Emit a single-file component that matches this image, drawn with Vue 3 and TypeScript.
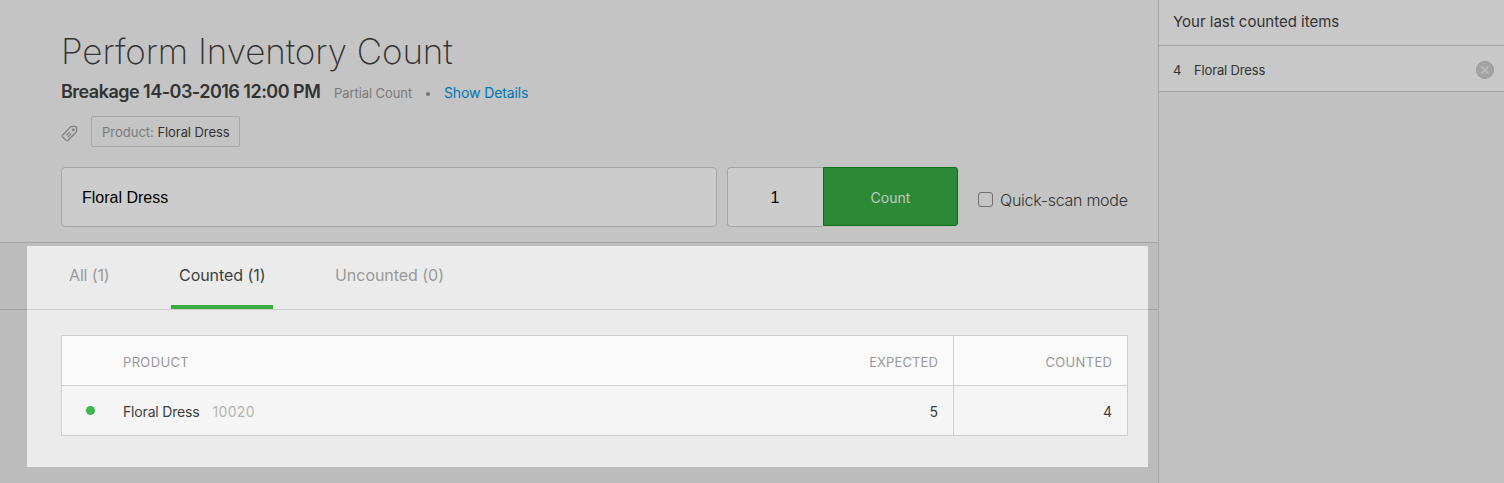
<script setup lang="ts">
interface CountedItem {
  name: string
  sku: string
  expected: number
  counted: number
}

interface Tab {
  key: string
  label: string
  count: number
}

const items: CountedItem[] = [{ name: 'Floral Dress', sku: '10020', expected: 5, counted: 4 }]

const tabs: Tab[] = [
  { key: 'all', label: 'All', count: 1 },
  { key: 'counted', label: 'Counted', count: 1 },
  { key: 'uncounted', label: 'Uncounted', count: 0 },
]
const activeTab = 'counted'
</script>

<template>
  <div class="page">
    <main class="main">
      <header class="head">
        <h1 class="title"><span>Perform Inventory Count</span></h1>
        <div class="meta">
          <strong class="name">Breakage 14-03-2016 12:00 PM</strong>
          <span class="kind">Partial Count</span>
          <i class="sep"></i>
          <a class="link">Show Details</a>
        </div>
        <div class="filters">
          <svg class="tag" width="17" height="17" viewBox="0 0 17 17" fill="none" stroke="#a0a0a0">
            <path d="M9.200 2.200Q9.700 1.700 10.400 1.600L13.600 1.300Q15.600 1.200 15.700 3.200L15.500 6.300Q15.400 7 14.900 7.500L7 15.300Q6 16.200 5 15.300L1.800 12Q.9 11 1.800 10Z" stroke-width="1.200" stroke-linejoin="round" />
            <circle cx="12.300" cy="4.800" r="1.100" fill="#a0a0a0" stroke-width=".8" />
            <path d="M5.300 10.400 8.700 7.200M7 12 10.200 8.800" stroke-width="1.200" />
          </svg>
          <span class="chip"><span class="chip-key">Product:</span> <span class="chip-value">Floral Dress</span></span>
        </div>
        <div class="controls">
          <div class="field search"><span>Floral Dress</span></div>
          <div class="field qty"><span>1</span></div>
          <button class="count"><span>Count</span></button>
          <label class="quick"><i class="box"></i><span>Quick-scan mode</span></label>
        </div>
      </header>

      <nav class="tabs">
        <a v-for="tab in tabs" :key="tab.key" class="tab" :class="[tab.key, { active: tab.key === activeTab }]">
          <span>{{ tab.label }} ({{ tab.count }})</span>
        </a>
      </nav>

      <section class="list">
        <div class="row heading">
          <div class="cell product"><span class="h-product">PRODUCT</span></div>
          <div class="cell expected"><span class="h-expected">EXPECTED</span></div>
          <div class="cell counted"><span class="h-counted">COUNTED</span></div>
        </div>
        <div v-for="item in items" :key="item.sku" class="row">
          <div class="cell product">
            <i class="dot"></i>
            <span class="p-name">{{ item.name }}</span>
            <span class="sku">{{ item.sku }}</span>
          </div>
          <div class="cell expected">{{ item.expected }}</div>
          <div class="cell counted">{{ item.counted }}</div>
        </div>
      </section>
    </main>

    <aside class="side">
      <div class="side-title"><span>Your last counted items</span></div>
      <div v-for="item in items" :key="item.sku" class="side-item">
        <span class="side-qty">{{ item.counted }}</span>
        <span class="side-name">{{ item.name }}</span>
        <svg class="remove" width="18" height="18" viewBox="0 0 18 18" fill="none">
          <circle cx="9" cy="9" r="8.500" fill="#cccccc" stroke="#bdbdbd" />
          <path d="M5.500 5.500 12.500 12.500M12.500 5.500 5.500 12.500" stroke="#f4f4f4" stroke-width="1.100" />
        </svg>
      </div>
    </aside>

    <div class="spotlight"></div>
  </div>
</template>

<style>
body {
  margin: 0;
}
</style>

<style scoped>
.page {
  position: relative;
  display: flex;
  width: 1504px;
  height: 483px;
  overflow: hidden;
  background: #ebebeb;
  color: #404040;
  font-family: Inter, "Liberation Sans", sans-serif;
  white-space: nowrap;
}
.main {
  width: 1158px;
}
.head {
  box-sizing: border-box;
  height: 243px;
  padding: 29px 30px 0 61px;
  background: #f6f6f6;
  border-bottom: 1px solid #cfcfcf;
}
.title {
  margin: 0;
  height: 46px;
  font-size: 35px;
  line-height: 45px;
  font-weight: 200;
  letter-spacing: -0.07px;
}
.meta {
  display: flex;
  align-items: center;
  height: 34px;
}
.name {
  width: 273px;
  margin-top: -1px;
  font-size: 18px;
  font-weight: 600;
  letter-spacing: -0.52px;
}
.kind {
  width: 93px;
  padding-top: 2px;
  font-size: 13px;
  letter-spacing: -0.08px;
  color: #999;
}
.sep {
  width: 4px;
  height: 4px;
  margin: 4px 13px 0 -1px;
  border-radius: 50%;
  background: #929292;
}
.link {
  margin-left: 1px;
  padding-top: 1px;
  font-size: 14px;
  letter-spacing: -0.12px;
  color: #0093e5;
}
.filters {
  display: flex;
  align-items: center;
  height: 31px;
  margin-top: 7px;
}
.tag {
  margin: 3px 13px 0 0;
}
.chip {
  box-sizing: border-box;
  width: 149px;
  height: 31px;
  padding-left: 10px;
  border: 1px solid #d2d2d2;
  border-radius: 2px;
  font-size: 13px;
  line-height: 31px;
  letter-spacing: -0.08px;
}
.chip-key {
  letter-spacing: 0;
  color: #999;
}
.controls {
  display: flex;
  height: 60px;
  margin-top: 20px;
}
.field {
  box-sizing: border-box;
  flex: none;
  height: 60px;
  border: 1px solid #cfcfcf;
  background: #fff;
  color: #000;
  font-family: "Liberation Sans", Arial, sans-serif;
  font-size: 16px;
  line-height: 60px;
}
.search {
  width: 656px;
  margin-right: 10px;
  padding-left: 20px;
  border-radius: 4px;
}
.qty {
  width: 96px;
  padding-right: 1px;
  border-right: 0;
  border-radius: 4px 0 0 4px;
  text-align: center;
}
.count {
  flex: none;
  width: 135px;
  height: 59px;
  margin: 0;
  padding: 2px 0 0;
  border: 1px solid #0b8c1c;
  border-radius: 0 3px 3px 0;
  background: #37ad44;
  color: #f0f7f0;
  font: 14px Inter, sans-serif;
}
.quick {
  display: flex;
  flex: none;
  align-items: center;
  height: 60px;
  margin-left: 20px;
  padding-top: 3px;
  font-size: 16px;
  font-weight: 300;
  letter-spacing: -0.26px;
}
.box {
  box-sizing: border-box;
  width: 15px;
  height: 15px;
  margin: 0 7px 1px 0;
  border: 1px solid #8c8c8c;
  border-radius: 3px;
}
.tabs {
  display: flex;
  box-sizing: border-box;
  height: 67px;
  padding-left: 61px;
  border-bottom: 1px solid #cfcfcf;
}
.tab {
  box-sizing: border-box;
  height: 66px;
  padding-left: 8px;
  font-size: 16px;
  line-height: 65px;
  letter-spacing: -0.04px;
  color: #999;
}
.tab.all {
  width: 110px;
  letter-spacing: -0.15px;
}
.tab.counted {
  width: 102px;
  margin-right: 54px;
}
.tab.active {
  border-bottom: 4px solid #37ad44;
  color: #404040;
}
.list {
  box-sizing: border-box;
  width: 1067px;
  margin: 25px 0 0 61px;
  border: 1px solid #cfcfcf;
  font-size: 14px;
}
.row {
  display: flex;
  height: 49px;
  background: #f5f5f5;
}
.row.heading {
  border-bottom: 1px solid #cfcfcf;
  background: #fafafa;
  color: #999;
  font-size: 13px;
}
.cell {
  box-sizing: border-box;
  padding-top: 1px;
  line-height: 49px;
}
.heading .cell {
  padding-top: 2px;
}
.cell.product {
  display: flex;
  width: 716px;
  padding-left: 61px;
}
.h-product,
.h-counted {
  letter-spacing: 0.35px;
  margin-right: -0.35px;
}
.h-expected {
  letter-spacing: 0.12px;
}
.cell.expected {
  width: 175px;
  padding-right: 15px;
  text-align: right;
}
.cell.counted {
  width: 174px;
  padding-right: 15px;
  border-left: 1px solid #cfcfcf;
  text-align: right;
}
.dot {
  width: 9px;
  height: 9px;
  margin: 19px 28px 0 -37px;
  border-radius: 50%;
  background: #42b54e;
}
.p-name {
  letter-spacing: -0.17px;
}
.sku {
  margin-left: 13px;
  letter-spacing: 0.3px;
  color: #b3b3b3;
}
.side {
  flex: 1;
  border-left: 1px solid #cfcfcf;
  background: #f2f2f2;
}
.side-title {
  height: 45px;
  padding-left: 14px;
  border-bottom: 1px solid #cfcfcf;
  background: #fafafa;
  font-size: 15px;
  line-height: 43px;
}
.side-item {
  display: flex;
  align-items: center;
  height: 45px;
  padding: 0 10px 0 14px;
  border-bottom: 1px solid #cfcfcf;
  background: #fafafa;
  font-size: 13px;
  line-height: 20px;
}
.side-qty {
  width: 20px;
  margin: 3px 1px 0 0;
}
.side-name {
  margin-top: 3px;
  letter-spacing: -0.15px;
}
.remove {
  margin: 3px 0 0 auto;
}
/* Dims everything outside the highlighted area */
.spotlight {
  position: absolute;
  left: 27px;
  top: 246px;
  width: 1121px;
  height: 221px;
  box-shadow: 0 0 0 1600px rgba(0, 0, 0, 0.2);
}
</style>
